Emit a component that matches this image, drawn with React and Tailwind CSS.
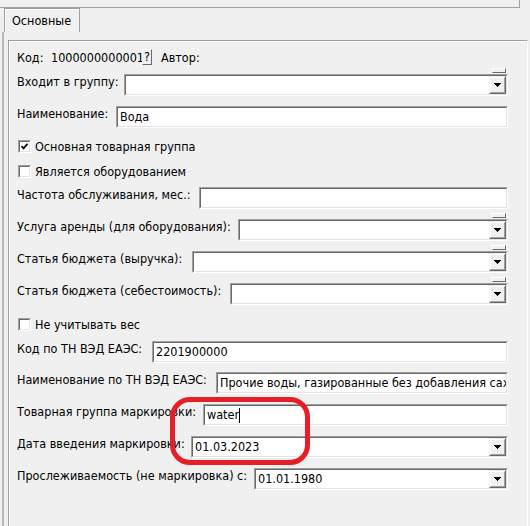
import React from 'react'

// classic sunken 3D edit frame
function Sunken({ children, className = '' }) {
  return (
    <div className={`border border-t-[#a0a0a0] border-l-[#a0a0a0] border-b-white border-r-white ${className}`}>
      <div className="h-full border border-t-[#696969] border-l-[#696969] border-b-[#e3e3e3] border-r-[#e3e3e3] bg-white flex">
        {children}
      </div>
    </div>
  )
}

function Arrow() {
  return (
    <svg width="7" height="4" viewBox="0 0 7 4">
      <path d="M0 0h7v1h-1v1h-1v1h-1v1h-1v-1h-1v-1h-1v-1h-1z" fill="#000" />
    </svg>
  )
}

function DropButton() {
  return (
    <div className="w-[17px] h-full shrink-0 border border-t-[#f0f0f0] border-l-[#f0f0f0] border-b-[#696969] border-r-[#696969]">
      <div className="h-full border border-t-white border-l-white border-b-[#a0a0a0] border-r-[#a0a0a0] bg-[#f0f0f0] flex items-center justify-center">
        <Arrow />
      </div>
    </div>
  )
}

function Field({ label, labelW, value, combo, grip, mt, cursor }) {
  return (
    <div className={`flex items-start ${mt}`}>
      <div className={`shrink-0 leading-4 whitespace-nowrap ${labelW}`}>{label}</div>
      <div className="relative flex-1 min-w-0">
        {grip && (
          <div className="absolute right-[2px] -top-[6px] w-[14px] h-[5px] border border-t-white border-l-white border-b-[#696969] border-r-[#696969] bg-[#f0f0f0]" />
        )}
        <Sunken className="h-[22px]">
          <div className="flex-1 min-w-0 overflow-hidden whitespace-nowrap px-[2px] leading-[18px] flex items-center">
            <span>{value}</span>
            {cursor && <span className="inline-block w-px h-[15px] bg-black" />}
          </div>
          {combo && <DropButton />}
        </Sunken>
      </div>
    </div>
  )
}

function Check({ label, checked, mt }) {
  return (
    <div className={`flex items-center h-[13px] ${mt}`}>
      <div className="ml-[1px] w-[13px] h-[13px] shrink-0 border border-t-[#a0a0a0] border-l-[#a0a0a0] border-b-white border-r-white">
        <div className="h-full border border-t-[#696969] border-l-[#696969] border-b-[#e3e3e3] border-r-[#e3e3e3] bg-white flex items-center justify-center">
          {checked && (
            <svg width="9" height="9" viewBox="0 0 9 9">
              <path d="M1.5 4.2 L3.6 6.4 L7.6 1.8" stroke="#000" strokeWidth="1.7" fill="none" />
            </svg>
          )}
        </div>
      </div>
      <span className="ml-[4px] leading-4 whitespace-nowrap">{label}</span>
    </div>
  )
}

export default function App() {
  return (
    <div className="relative w-[530px] h-[526px] overflow-hidden bg-[#f0f0f0] text-black text-[12.5px] font-['DejaVu_Sans_Condensed','DejaVu_Sans',sans-serif] [font-stretch:condensed]">
      {/* edge of the frame above */}
      <div className="h-[8px] w-[520px] border-b border-r border-[#a0a0a0]" />

      {/* tab strip */}
      <div className="ml-[4px] w-[76px] h-[24px] border border-b-0 border-[#a0a0a0] shadow-[inset_1px_1px_0_#fff] flex items-center pl-[7px] leading-4">
        Основные
      </div>

      {/* tab page */}
      <div className="ml-[2px] border-l-2 border-[#b9b9b9] pl-[4px] pt-[8px] h-[494px]">
        <div className="w-[520px] h-[490px] border-t border-l border-r border-t-[#a0a0a0] border-l-[#a0a0a0] border-r-white shadow-[inset_1px_1px_0_#fff] pl-[8px] pr-[19px] pt-[8px] flex flex-col">
          <div className="flex items-start h-[16px]">
            <span className="w-[34px] shrink-0 leading-4 mt-[1px]">Код:</span>
            <span className="w-[91px] shrink-0 leading-4 mt-[1px] whitespace-nowrap">1000000000001</span>
            <div className="w-[10px] h-[16px] shrink-0 border border-t-white border-l-white border-b-[#696969] border-r-[#696969] bg-[#f0f0f0] flex items-center justify-center leading-4">
              ?
            </div>
            <span className="ml-[9px] leading-4 mt-[1px]">Автор:</span>
          </div>

          <Field mt="mt-[9px]" label="Входит в группу:" labelW="w-[107px]" combo grip />
          <Field mt="mt-[10px]" label="Наименование:" labelW="w-[99px]" value="Вода" />

          <Check mt="mt-[12px]" label="Основная товарная группа" checked />
          <Check mt="mt-[12px]" label="Является оборудованием" />

          <Field mt="mt-[9px]" label="Частота обслуживания, мес.:" labelW="w-[182px]" />
          <Field mt="mt-[10px]" label="Услуга аренды (для оборудования):" labelW="w-[221px]" combo grip />
          <Field mt="mt-[10px]" label="Статья бюджета (выручка):" labelW="w-[175px]" combo grip />
          <Field mt="mt-[10px]" label="Статья бюджета (себестоимость):" labelW="w-[213px]" combo grip />

          <Check mt="mt-[13px]" label="Не учитывать вес" />

          <Field mt="mt-[10px]" label="Код по ТН ВЭД ЕАЭС:" labelW="w-[135px]" value="2201900000" />
          <Field mt="mt-[9px]" label="Наименование по ТН ВЭД ЕАЭС:" labelW="w-[199px]" value="Прочие воды, газированные без добавления сахара" />
          <Field mt="mt-[10px]" label="Товарная группа маркировки:" labelW="w-[186px]" value="water" cursor />
          <Field mt="mt-[10px]" label="Дата введения маркировки:" labelW="w-[174px]" value="01.03.2023" combo />
          <Field mt="mt-[10px]" label="Прослеживаемость (не маркировка) с:" labelW="w-[237px]" value="01.01.1980" combo />
        </div>
      </div>

      {/* red highlight drawn on top */}
      <div className="absolute left-[170px] top-[397px] w-[140px] h-[68px] border-[5px] border-[#e61e28] rounded-[20px]" />
    </div>
  )
}
